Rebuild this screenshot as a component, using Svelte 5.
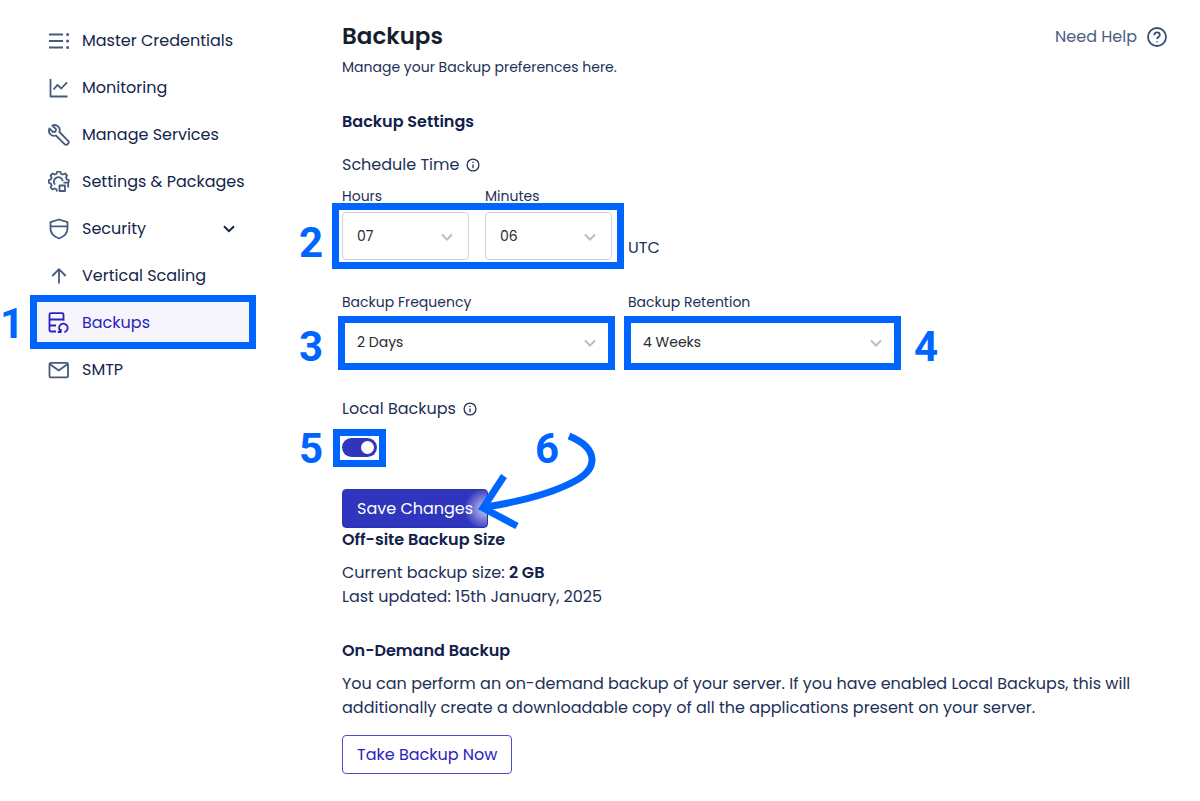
<script>
  const items = [
    { label: 'Master Credentials', icon: 'list' },
    { label: 'Monitoring', icon: 'chart' },
    { label: 'Manage Services', icon: 'wrench' },
    { label: 'Settings & Packages', icon: 'gear' },
    { label: 'Security', icon: 'shield', expandable: true },
    { label: 'Vertical Scaling', icon: 'arrow' },
    { label: 'Backups', icon: 'backup', active: true },
    { label: 'SMTP', icon: 'mail' },
  ];
  let hours = $state('07');
  let minutes = $state('06');
  let frequency = $state('2 Days');
  let retention = $state('4 Weeks');
  let local = $state(true);
</script>

{#snippet picker(id, value)}
  <div class="select">
    <select {id}><option>{value}</option></select>
    <svg width="14" height="10" viewBox="0 0 14 10" aria-hidden="true"><path d="M2 2.5l5 5 5-5" /></svg>
  </div>
{/snippet}

{#snippet info()}
  <svg class="info" width="14" height="14" viewBox="0 0 14 14" aria-hidden="true">
    <circle cx="7" cy="7" r="5.9" /><path d="M7 6.4v3.8M7 3.7v1.3" />
  </svg>
{/snippet}

<div class="page">
  <nav aria-label="Server">
    {#each items as item}
      <a href="#top" class:active={item.active} aria-current={item.active ? 'page' : undefined}>
        <svg class="icon" width="22" height="22" viewBox="0 0 22 22" aria-hidden="true">
          {#if item.icon === 'list'}
            <path d="M1 4.5h14M1 11h14M1 17.5h14" />
            <path class="dots" d="M19.6 4.5h.01M19.6 11h.01M19.6 17.5h.01" />
          {:else if item.icon === 'chart'}
            <path d="M2.500 2v17.500H19.500M5.500 12.500l4-4.600 3.800 3.600L19 5.300" />
          {:else if item.icon === 'wrench'}
            <path d="M4.300 1.500l3.700 3.600-.5 2.500-2.400.6L1.400 4.500C.4 7 1 9 2.500 10.400c1.500 1.400 3.500 1.700 5.400 1.100l8.700 8.700c.8.8 2 .8 2.800.1l.7-.7c.8-.8.8-2 0-2.800L11.400 8c.7-2 .3-4-1.100-5.400C8.700 1 6.400.6 4.300 1.500z" />
          {:else if item.icon === 'gear'}
            <path d="M9 20.500l-.6-2.200-1.700-.8-2.200 1-1.900-2 1-2.200-.7-1.700-2.100-.9V9.200l2.100-.8.7-1.800-1-2.100 2-2 2.100 1 1.700-.7.900-2.100h3l.8 2.100 1.800.7 2.100-1 2 2-1 2.100.8 1.800 2 .8v2.300M7 13.700a4.500 4.500 0 1 1 7.800-3.500" />
            <path d="M11.500 14.500h5.500v5.500h-5.500zM15.500 11.700h4.700V16.500" />
          {:else if item.icon === 'shield'}
            <path d="M11 1.500l8.500 2.700v6.400c0 5-3.800 8.300-8.500 9.900-4.700-1.600-8.500-4.900-8.500-9.900V4.200zM2.500 8.300h17" />
          {:else if item.icon === 'arrow'}
            <path d="M11 18.500V4.500M4.300 11L11 4.200l6.700 6.800" />
          {:else if item.icon === 'backup'}
            <path d="M8 19.500H3c-.9 0-1.500-.6-1.500-1.500V2.500c0-.8.600-1.300 1.500-1.300h11c.9 0 1.500.5 1.500 1.300v6.200M1.500 7.500h14M1.500 13.500H8" />
            <path d="M9.800 20h3v-2.900M12.500 19.200a4.300 4.300 0 1 1 3.800 1" />
          {:else}
            <rect x="1.500" y="3.800" width="18.500" height="14.500" rx="1.300" /><path d="M1.800 5l8.900 6.500L19.700 5" />
          {/if}
        </svg>
        <span>{item.label}</span>
        {#if item.expandable}
          <svg class="more" width="12" height="8" viewBox="0 0 12 8" aria-hidden="true"><path d="M1 1.200l5 5 5-5" /></svg>
        {/if}
        {#if item.active}<b class="frame nav-frame"></b><b class="num nav-num">1</b>{/if}
      </a>
    {/each}
  </nav>

  <main id="top">
    <header>
      <div>
        <h1>Backups</h1>
        <p class="lead">Manage your Backup preferences here.</p>
      </div>
      <a class="help" href="#help">
        Need Help
        <svg width="20" height="20" viewBox="0 0 20 20" aria-hidden="true">
          <circle cx="10" cy="10" r="9" /><path d="M7.300 8.200c0-1.700 1.200-2.800 2.800-2.800 1.500 0 2.700 1 2.700 2.500 0 2.100-2.700 2.100-2.700 4.200M10.100 14.200v1" />
        </svg>
      </a>
    </header>

    <h2 class="settings-title">Backup Settings</h2>
    <div class="caption">Schedule Time {@render info()}</div>
    <div class="time-row">
      <div class="times">
        <div class="field"><label for="hours">Hours</label>{@render picker('hours', hours)}</div>
        <div class="field"><label for="minutes">Minutes</label>{@render picker('minutes', minutes)}</div>
        <b class="frame time-frame"></b><b class="num time-num">2</b>
      </div>
      <span>UTC</span>
    </div>

    <div class="plans">
      <div class="field">
        <label for="frequency">Backup Frequency</label>{@render picker('frequency', frequency)}
        <b class="frame plan-frame"></b><b class="num plan-num">3</b>
      </div>
      <div class="field">
        <label for="retention">Backup Retention</label>{@render picker('retention', retention)}
        <b class="frame plan-frame"></b><b class="num plan-num after">4</b>
      </div>
    </div>

    <div class="caption local"><label for="local">Local Backups</label> {@render info()}</div>
    <div class="switch">
      <input id="local" type="checkbox" bind:checked={local} />
      <b class="frame switch-frame"></b><b class="num switch-num">5</b>
    </div>

    <div class="save">
      <button class="primary" type="button">Save Changes</button>
      <b class="num save-num">6</b>
      <svg class="pointer" width="124" height="110" viewBox="476 428 124 110" aria-hidden="true">
        <path d="M569 436C598 448 599 468 575 481C553 493 523 501 486 507" />
        <path d="M504 476L483 508L517 526" />
      </svg>
    </div>

    <h2>Off-site Backup Size</h2>
    <p class="size">Current backup size: <strong>2 GB</strong><br />Last updated: 15th January, 2025</p>

    <h2 class="demand-title">On-Demand Backup</h2>
    <p class="demand">You can perform an on-demand backup of your server. If you have enabled Local Backups, this will additionally create a downloadable copy of all the applications present on your server.</p>
    <button class="outline" type="button">Take Backup Now</button>
  </main>
</div>

<style>
  :global(body) { margin: 0; background: #fff; }
  .page {
    display: flex;
    font: 16px/24px Poppins, Inter, sans-serif;
    color: #1d3057;
  }
  * { box-sizing: border-box; }
  svg { fill: none; stroke: currentColor; flex: none; }
  nav { width: 256px; flex: none; padding: 17px 0 0 30px; }
  nav a {
    position: relative;
    display: flex;
    align-items: center;
    gap: 12px;
    height: 47px;
    padding: 0 21px 0 18px;
    color: #13254a;
    text-decoration: none;
  }
  nav span { flex: 1; white-space: nowrap; }
  nav .active { background: #f6f5fc; color: #2a22c0; }
  .icon { color: #465a7c; stroke-width: 1.8; stroke-linejoin: round; }
  .active .icon { color: #2a22c0; }
  .dots { stroke-width: 3; stroke-linecap: round; }
  .more { stroke-width: 2; }

  main { flex: 1; min-width: 0; padding: 20px 33px 27px 86px; }
  header { display: flex; justify-content: space-between; align-items: flex-start; }
  h1 { margin: 0 0 3px; font-size: 23px; line-height: 33px; font-weight: 600; color: #141f30; }
  h2 { margin: 0; font-size: 16px; line-height: 24px; font-weight: 600; color: #11214a; }
  p { margin: 0; }
  .lead { font-size: 14px; line-height: 22px; }
  .help { display: flex; align-items: center; gap: 10px; margin-top: 5px; color: #4a5e82; text-decoration: none; }
  .help svg { stroke-width: 1.8; color: #3a4e74; }
  .settings-title { margin-top: 32px; }
  .caption { display: flex; align-items: center; gap: 7px; margin-top: 19px; }
  .info { stroke-width: 1.3; }
  .time-row { display: flex; align-items: flex-end; gap: 16px; margin-top: 9px; }
  .times { position: relative; display: grid; grid-template-columns: 1fr 1fr; gap: 16px; width: 270px; }
  .field { position: relative; display: flex; flex-direction: column; gap: 6px; }
  .field label { font-size: 14px; line-height: 20px; }
  .select { position: relative; }
  select {
    display: block;
    width: 100%;
    height: 48px;
    padding: 0 14px;
    appearance: none;
    border: 1px solid #cdd2db;
    border-radius: 4px;
    background: #fff;
    color: #27292e;
    font: inherit;
    font-size: 14px;
  }
  .select svg { position: absolute; right: 15px; top: 20px; color: #bcbec4; stroke-width: 2; pointer-events: none; }
  .plans { display: grid; grid-template-columns: 1fr 1fr; gap: 16px; max-width: 556px; margin-top: 32px; }
  .local { margin-top: 31px; }
  .switch { position: relative; width: 35px; height: 19px; margin-top: 17px; }
  .switch input {
    display: block;
    width: 35px;
    height: 19px;
    margin: 0;
    padding: 3px;
    appearance: none;
    border-radius: 10px;
    background: #9aa3b5;
  }
  .switch input::before { content: ''; display: block; width: 13px; height: 13px; border-radius: 50%; background: #fff; }
  .switch input:checked { background: #2f36bd; }
  .switch input:checked::before { margin-left: auto; }
  .save { position: relative; width: fit-content; margin-top: 32px; }
  button { display: block; height: 39px; padding: 0 14px; border-radius: 4px; font: inherit; }
  .primary {
    min-width: 145px;
    border: 1px solid #2931b4;
    background: radial-gradient(circle at 142px 19px, #c4c7ee 0, #8d91dc 8px, #2f36bd 21px);
    color: #fff;
  }
  .size { margin-top: 9px; }
  strong { font-weight: 600; color: #11214a; }
  .demand-title { margin-top: 30px; }
  .demand { max-width: 800px; margin-top: 9px; }
  .outline { min-width: 170px; margin-top: 15px; border: 1px solid #4a50cc; background: #fff; color: #2a22c0; }

  .frame { position: absolute; border: 7px solid #0065ff; pointer-events: none; }
  .num { position: absolute; font: 700 42px/42px Roboto, sans-serif; color: #0065ff; }
  .nav-frame { inset: -4px 0 -3px; }
  .nav-num { left: -30px; top: 4px; }
  .time-frame { inset: 17px -12px -9px -10px; }
  .time-num { left: -43px; top: 36px; }
  .plan-frame { inset: 24px -3px -4px -4px; }
  .plan-num { left: -43px; top: 34px; }
  .plan-num.after { left: auto; right: -40px; }
  .switch-frame { inset: -9px -9px -10px; }
  .switch-num { left: -43px; top: -10px; }
  .save-num { left: 193px; top: -61px; }
  .pointer { position: absolute; left: 134px; top: -61px; color: #0065ff; stroke-width: 7; pointer-events: none; }
</style>
